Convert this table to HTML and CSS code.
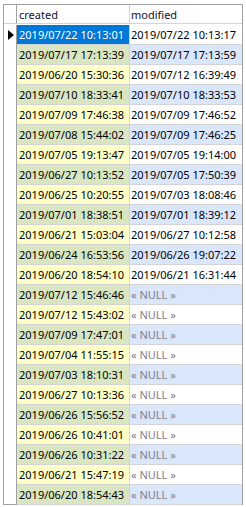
FILE: index.html
```html
<!DOCTYPE html>
<html>
<head>
<meta charset="utf-8">
<link rel="stylesheet" href="styles.css">
</head>
<body>
<div class="grid">
  <div class="gut head"></div><div class="cell head c1">created</div><div class="cell head c2">modified</div>

  <div class="gut"><span class="tri"></span></div><div class="cell c1 sel">2019/07/22 10:13:01</div><div class="cell c2">2019/07/22 10:13:17</div>
  <div class="gut"></div><div class="cell c1 alt">2019/07/17 17:13:39</div><div class="cell c2 alt">2019/07/17 17:13:59</div>
  <div class="gut"></div><div class="cell c1">2019/06/20 15:30:36</div><div class="cell c2">2019/07/12 16:39:49</div>
  <div class="gut"></div><div class="cell c1 alt">2019/07/10 18:33:41</div><div class="cell c2 alt">2019/07/10 18:33:53</div>
  <div class="gut"></div><div class="cell c1">2019/07/09 17:46:38</div><div class="cell c2">2019/07/09 17:46:52</div>
  <div class="gut"></div><div class="cell c1 alt">2019/07/08 15:44:02</div><div class="cell c2 alt">2019/07/09 17:46:25</div>
  <div class="gut"></div><div class="cell c1">2019/07/05 19:13:47</div><div class="cell c2">2019/07/05 19:14:00</div>
  <div class="gut"></div><div class="cell c1 alt">2019/06/27 10:13:52</div><div class="cell c2 alt">2019/07/05 17:50:39</div>
  <div class="gut"></div><div class="cell c1">2019/06/25 10:20:55</div><div class="cell c2">2019/07/03 18:08:46</div>
  <div class="gut"></div><div class="cell c1 alt">2019/07/01 18:38:51</div><div class="cell c2 alt">2019/07/01 18:39:12</div>
  <div class="gut"></div><div class="cell c1">2019/06/21 15:03:04</div><div class="cell c2">2019/06/27 10:12:58</div>
  <div class="gut"></div><div class="cell c1 alt">2019/06/24 16:53:56</div><div class="cell c2 alt">2019/06/26 19:07:22</div>
  <div class="gut"></div><div class="cell c1">2019/06/20 18:54:10</div><div class="cell c2">2019/06/21 16:31:44</div>
  <div class="gut"></div><div class="cell c1 alt">2019/07/12 15:46:46</div><div class="cell c2 alt null">« NULL »</div>
  <div class="gut"></div><div class="cell c1">2019/07/12 15:43:02</div><div class="cell c2 null">« NULL »</div>
  <div class="gut"></div><div class="cell c1 alt">2019/07/09 17:47:01</div><div class="cell c2 alt null">« NULL »</div>
  <div class="gut"></div><div class="cell c1">2019/07/04 11:55:15</div><div class="cell c2 null">« NULL »</div>
  <div class="gut"></div><div class="cell c1 alt">2019/07/03 18:10:31</div><div class="cell c2 alt null">« NULL »</div>
  <div class="gut"></div><div class="cell c1">2019/06/27 10:13:36</div><div class="cell c2 null">« NULL »</div>
  <div class="gut"></div><div class="cell c1 alt">2019/06/26 15:56:52</div><div class="cell c2 alt null">« NULL »</div>
  <div class="gut"></div><div class="cell c1">2019/06/26 10:41:01</div><div class="cell c2 null">« NULL »</div>
  <div class="gut"></div><div class="cell c1 alt">2019/06/26 10:31:22</div><div class="cell c2 alt null">« NULL »</div>
  <div class="gut"></div><div class="cell c1">2019/06/21 15:47:19</div><div class="cell c2 null">« NULL »</div>
  <div class="gut last"></div><div class="cell c1 alt">2019/06/20 18:54:43</div><div class="cell c2 alt null">« NULL »</div>
</div>
</body>
</html>
```

FILE: styles.css
```css
html, body {
  margin: 0;
  padding: 0;
  background: #ffffff;
}

.grid {
  display: grid;
  grid-template-columns: 13px 113px 112px;
  grid-auto-rows: 20px;
  margin: 4px 0 0 3px;
  width: max-content;
  border-left: 1px solid #a0a0a0;
  border-top: 1px solid #a0a0a0;
  border-right: 1px solid #a0a0a0;
  font-family: "Noto Sans", "Open Sans", sans-serif;
  font-size: 11px;
  color: #000000;
}

.gut {
  box-sizing: border-box;
  border-right: 1px solid #a0a0a0;
  background: #ffffff;
  display: flex;
  align-items: center;
  justify-content: center;
}

.gut.head {
  height: 19px;
  border-bottom: 1px solid #d0d0d0;
}

.gut.last {
  border-bottom: 1px solid #a0a0a0;
}

.cell {
  box-sizing: border-box;
  border-bottom: 1px solid #d4d4d4;
  padding-left: 2px;
  display: flex;
  align-items: center;
  white-space: nowrap;
  overflow: hidden;
  background: #ffffff;
}

.c1 {
  border-right: 1px solid #d4d4d4;
  background: #ffffc8;
}

.c2 {
  padding-left: 1px;
}

.c1.alt {
  background: #dae6c2;
}

.c2.alt {
  background: #dae6fc;
}

.head {
  height: 19px;
  background: #ffffff;
  color: #101030;
}

.cell.head {
  background: #ffffff;
}

.c1.sel {
  background: #0078d7;
  color: #ffffff;
}

.null {
  color: #80808c;
}

.tri {
  width: 0;
  height: 0;
  border-top: 5px solid transparent;
  border-bottom: 5px solid transparent;
  border-left: 6px solid #000000;
  margin-left: 1px;
}
```
